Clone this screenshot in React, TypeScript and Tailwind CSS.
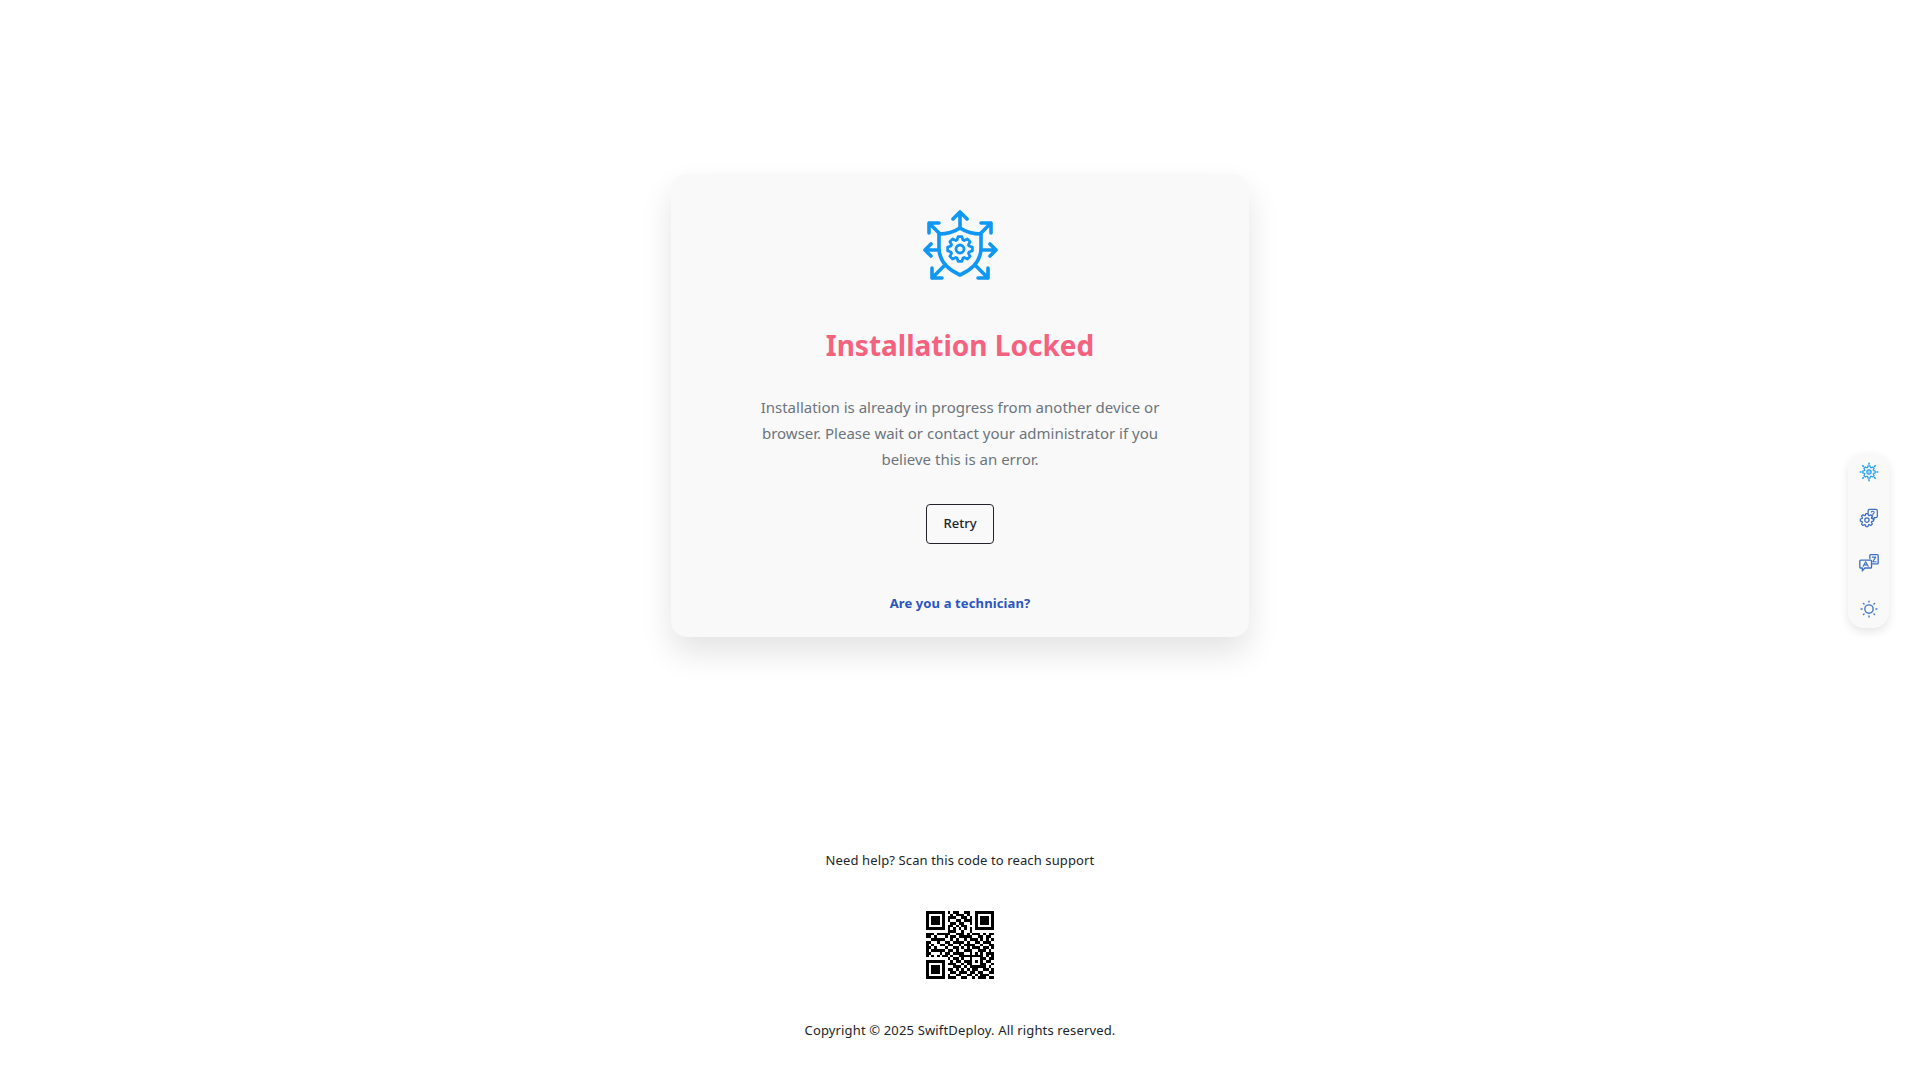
const QR = [
  "1111111010110011001111111",
  "1000001001011101001000001",
  "1011101011100110101011101",
  "1011101010011011101011101",
  "1011101001101100101011101",
  "1000001011010110001000001",
  "1111111010101010101111111",
  "0000000011100100100000000",
  "1110111110011101011101011",
  "1101000101101111100110110",
  "0011111001010010111010101",
  "1100100110111101001101110",
  "1010011011001011110010011",
  "1101000100110101011101101",
  "1011111011010011100111010",
  "1100010110111100101010111",
  "1010101101001111111110101",
  "0000000010110100100011011",
  "1111111001011011101010110",
  "1000001011100101100011001",
  "1011101000111010111111010",
  "1011101011010101011001101",
  "1011101001101110110110011",
  "1000001010011001101011100",
  "1111111011100110010111011",
];

function gearPath(cx: number, cy: number, outer: number, inner: number, teeth: number) {
  const step = (Math.PI * 2) / teeth;
  const pts: string[] = [];
  for (let i = 0; i < teeth; i++) {
    const a = i * step - Math.PI / 2;
    const offs: [number, number][] = [
      [-0.5, inner],
      [-0.24, outer],
      [0.24, outer],
      [0.5, inner],
    ];
    for (const [o, r] of offs) {
      const t = a + o * step * 0.82;
      pts.push(`${(cx + Math.cos(t) * r).toFixed(2)} ${(cy + Math.sin(t) * r).toFixed(2)}`);
    }
  }
  return `M${pts.join("L")}Z`;
}

function DeployIcon() {
  return (
    <svg
      viewBox="22 14 76 72"
      className="h-[72px] w-[76px] text-[#0f97f3]"
      fill="none"
      stroke="currentColor"
      strokeWidth="3.6"
      strokeLinecap="round"
      strokeLinejoin="round"
    >
      <path d="M60 32C66 36 74 38 81 38V52C81 66 71 74 60 79C49 74 39 66 39 52V38C46 38 54 36 60 32Z" />
      <path d={gearPath(60, 53, 12.5, 9.5, 8)} strokeWidth="2.8" />
      <circle cx="60" cy="53" r="4" strokeWidth="2.8" />
      <path d="M60 32V17M53 23L60 16L67 23" />
      <path d="M38 54H25M31 48L25 54L31 60" />
      <path d="M82 54H96M90 48L96 54L90 60" />
      <path d="M40 38L29 27M29 37V27H39" />
      <path d="M80 38L91 27M81 27H91V37" />
      <path d="M44 70L32 82M32 72V82H42" />
      <path d="M76 70L88 82M78 82H88V72" />
    </svg>
  );
}

function NetworkIcon() {
  return (
    <svg viewBox="0 0 24 24" className="h-5 w-5 text-[#2fa3ea]" fill="none" stroke="currentColor" strokeWidth="1.5">
      <path d={gearPath(12, 12, 7.5, 5.6, 8)} />
      <circle cx="12" cy="12" r="2.6" fill="#9bd3f5" />
      <g strokeWidth="2" strokeLinecap="round">
        <path d="M12 1.5V2.5M12 21.5V22.5M1.5 12H2.5M21.5 12H22.5M4.5 4.5L5.2 5.2M18.8 18.8L19.5 19.5M4.5 19.5L5.2 18.8M18.8 5.2L19.5 4.5" />
      </g>
    </svg>
  );
}

function GearHelpIcon() {
  return (
    <svg viewBox="0 0 24 24" className="h-5 w-5 text-[#3f6fc4]" fill="none" stroke="currentColor" strokeWidth="1.5" strokeLinejoin="round">
      <path d="M11 6.5V3.2C11 2.3 11.7 1.5 12.6 1.5H20.4C21.3 1.5 22 2.3 22 3.2V10C22 10.9 21.3 11.6 20.4 11.6H18V14L15.6 11.6H14.5" />
      <path d={gearPath(9.5, 14.5, 8, 6, 8)} />
      <circle cx="9.5" cy="14.5" r="2.6" />
      <path d="M14.8 5C15 3.6 18.2 3.6 18.2 5.4C18.2 6.6 16.5 6.6 16.5 8M16.5 9.4V9.6" strokeLinecap="round" strokeWidth="1.3" />
    </svg>
  );
}

function TranslateIcon() {
  return (
    <svg viewBox="0 0 24 24" className="h-5 w-5 text-[#3f6fc4]" fill="none" stroke="currentColor" strokeWidth="1.6" strokeLinejoin="round" strokeLinecap="round">
      <path d="M13 6.5V3C13 2.4 13.4 2 14 2H22C22.6 2 23 2.4 23 3V12C23 12.6 22.6 13 22 13H16" />
      <path d="M2 8.5H14C14.6 8.5 15 8.9 15 9.5V17C15 17.6 14.6 18 14 18H7L4 21.5V18H2C1.4 18 1 17.6 1 17V9.5C1 8.9 1.4 8.5 2 8.5Z" />
      <path d="M5 16L8 10.5L11 16M6 14.2H10" strokeWidth="1.4" />
      <path d="M16 5H20L16.5 10.5H20.5" strokeWidth="1.4" />
    </svg>
  );
}

function SunIcon() {
  return (
    <svg viewBox="0 0 24 24" className="h-5 w-5 text-[#4378cc]" fill="none" stroke="currentColor" strokeWidth="1.7" strokeLinecap="round">
      <circle cx="12" cy="12" r="5" />
      <path d="M12 2.5V3.7M12 20.3V21.5M2.5 12H3.7M20.3 12H21.5M5.3 5.3L6.1 6.1M17.9 17.9L18.7 18.7M5.3 18.7L6.1 17.9M17.9 6.1L18.7 5.3" />
    </svg>
  );
}

function QrCode() {
  return (
    <svg viewBox="0 0 25 25" className="h-[68px] w-[68px]" shapeRendering="crispEdges">
      {QR.flatMap((row, y) =>
        row.split("").map((c, x) => (c === "1" ? <rect key={`${x}-${y}`} x={x} y={y} width="1" height="1" fill="#000" /> : null))
      )}
    </svg>
  );
}

export default function App() {
  return (
    <div className="flex min-h-screen flex-col items-center bg-white pt-[174px] font-['Noto_Sans','Open_Sans',sans-serif] text-[#212529]">
      <main className="flex h-[463px] w-[578px] flex-col items-center rounded-2xl bg-[#f9f9fa] pt-[36px] shadow-[0_16px_32px_rgba(0,0,0,0.11)]">
        <DeployIcon />
        <h1 className="mt-[43px] text-[28px] leading-[40px] font-bold text-[#f4627f]">Installation Locked</h1>
        <p className="mt-[29px] w-[420px] text-center text-[15px] leading-[26px] text-[#6c757d]">
          Installation is already in progress from another device or browser. Please wait or contact your administrator if you
          believe this is an error.
        </p>
        <button className="mt-[32px] h-10 w-[68px] rounded border border-[#212529] text-[13px] font-medium">Retry</button>
        <a className="mt-[49px] text-[13px] leading-5 font-bold tracking-[0.12px] text-[#2a55bf]">Are you a technician?</a>
      </main>

      <p className="mt-[213px] text-[13px] leading-5 tracking-[0.12px]">Need help? Scan this code to reach support</p>
      <div className="mt-[41px]">
        <QrCode />
      </div>
      <p className="mt-[41px] text-[13px] leading-5 tracking-[0.15px]">Copyright © 2025 SwiftDeploy. All rights reserved.</p>

      <aside className="fixed top-[453px] right-[31px] flex h-[175px] w-[41px] flex-col items-center justify-between rounded-2xl bg-[#f9f9fa] py-[9px] shadow-[0_4px_10px_rgba(0,0,0,0.1)]">
        <NetworkIcon />
        <GearHelpIcon />
        <TranslateIcon />
        <SunIcon />
      </aside>
    </div>
  );
}
